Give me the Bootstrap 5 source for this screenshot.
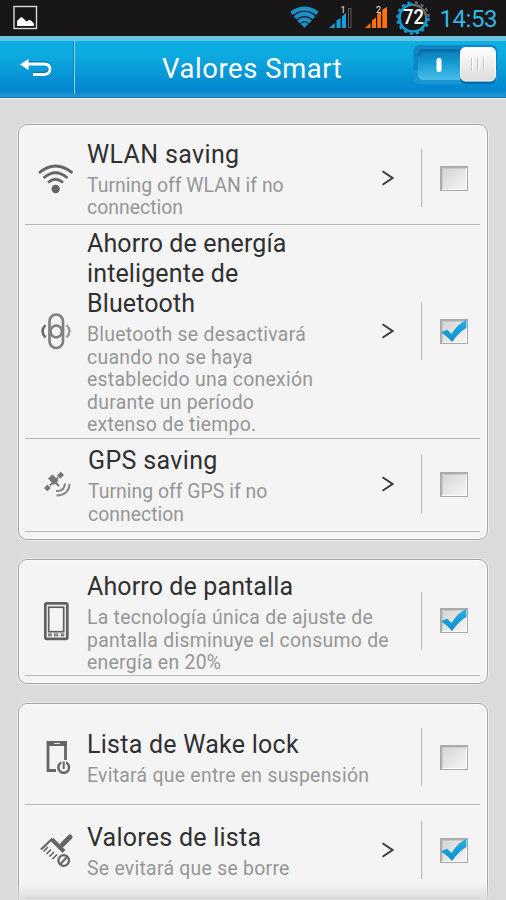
<!DOCTYPE html>
<html lang="es">
<head>
<meta charset="utf-8">
<meta name="viewport" content="width=device-width, initial-scale=1">
<title>Valores Smart</title>
<link rel="stylesheet" href="https://cdn.jsdelivr.net/npm/bootstrap@5.3.0/dist/css/bootstrap.min.css">
<style>
html,body{height:900px;overflow:hidden}
body{font-family:Roboto,sans-serif;background:#dbdbdb;color:#303030}
svg{display:block;flex:none}
.statusbar{height:36px;background:#181617}
.topbar{height:62px;border-top:5px solid #6cc5e0;border-bottom:1px solid #0f6fa5;background:linear-gradient(#0cafe2,#0cabe0 25%,#0486cf 88%,#2796d4);box-shadow:0 1px 0 #eef2f4}
.backbtn{width:75px;height:53px;border-right:1px solid #8fd4ee;box-shadow:inset -1px 0 0 #0a7fb8}
.heading{font-size:27.4px;line-height:32px;letter-spacing:.6px;color:#fff;font-weight:400;width:182px;margin-left:87px;white-space:nowrap}
.toggle{margin-left:67px}
.page{padding:26px 18px 0;height:802px;overflow:hidden}
.panel{background:#f4f4f4;border:1px solid #a2a2a2;border-radius:9px;box-shadow:0 0 0 1px #ececec,inset 0 0 0 1px #fbfbfb;padding:0 7px 7px 6px;margin-bottom:19px}
.setting{border-bottom:1px solid #b9b9b9}
.iconcell{width:62px;padding-left:10px}
.desc{font-size:19.4px;line-height:22.5px;letter-spacing:.27px;color:#969696;margin:5px 0 0;white-space:nowrap}
.ttl{font-size:25px;line-height:30px;letter-spacing:.12px;font-weight:400;margin:0;white-space:nowrap}
.latin .ttl{letter-spacing:.35px}
.latin .desc{letter-spacing:.02px}
.chev{margin-right:27px}
.rule{width:2px;height:58px;background:#bcbcbc;border-right:1px solid #e8e8e8}
.boxcell{width:57px;padding-left:17px}
.h1r{height:100px;padding-top:7px}
.h1r .txt{padding-top:3px}
.h2r{height:214px;padding-bottom:1px}
.h2r .txt{padding-top:4px}
.h3r{height:93px;padding-bottom:2px}
.h3r .txt{padding:4px 0 0 1px}
.h4r{height:116px;padding-top:6px}
.h4r .txt{padding-top:6px}
.h5r{height:101px;padding-top:6px}
.h5r .txt,.h6r .txt{padding-top:4px}
.h5r .ttl,.h6r .ttl{letter-spacing:.25px}
.h6r{height:93px;padding-bottom:2px}
.fade-edge{height:17px;background:linear-gradient(rgba(219,219,219,0),rgba(219,219,219,.95))}
</style>
<script src="https://cdn.jsdelivr.net/npm/bootstrap@5.3.0/dist/js/bootstrap.bundle.min.js"></script>
</head>
<body>
<svg width="0" height="0" class="position-absolute">
<defs>
<linearGradient id="gbox" x1="0" y1="0" x2="1" y2="1"><stop offset="0" stop-color="#d2d2d2"/><stop offset="1" stop-color="#f6f6f6"/></linearGradient>
<linearGradient id="gtick" x1="0" y1="0" x2="0" y2="1"><stop offset="0" stop-color="#27b0e6"/><stop offset="1" stop-color="#0b8fce"/></linearGradient>
<linearGradient id="gtrack" x1="0" y1="0" x2="0" y2="1"><stop offset="0" stop-color="#0878b4"/><stop offset=".45" stop-color="#169bd4"/><stop offset="1" stop-color="#48bde6"/></linearGradient>
<linearGradient id="gknob" x1="0" y1="0" x2="0" y2="1"><stop offset="0" stop-color="#fff"/><stop offset="1" stop-color="#dcdcdc"/></linearGradient>
<symbol id="box" viewBox="0 0 30 27"><rect x=".5" y="1.500" width="27" height="24" fill="url(#gbox)" stroke="#a9a9a9"/><path d="M1.500 25V2.500H27" fill="none" stroke="#a0a0a0" opacity=".75"/><path d="M2.500 24V3.500H26" fill="none" stroke="#bdbdbd" opacity=".6"/><path d="M2 24.500H26.500V3" fill="none" stroke="#fff"/></symbol>
<symbol id="tick" viewBox="0 0 30 27"><path d="M1 14.500L7 11.500L11.500 16C15 10 20 5 26.500 1.500V10C21 13 16 18 12 24C9 20 5 17 1 14.500Z" fill="url(#gtick)"/></symbol>
<symbol id="chevron" viewBox="0 0 12 16"><path d="M.5 1.200L10.500 8L.5 14.800" fill="none" stroke="#3a3a3a" stroke-width="1.900"/></symbol>
</defs>
</svg>

<header>
<div class="statusbar d-flex align-items-center">
<svg width="506" height="36" viewBox="0 0 506 36">
<rect x="14" y="6.500" width="22.500" height="22" fill="#181617" stroke="#d9d9d9" stroke-width="1.400"/>
<path d="M17 26V21L20 18L21.500 17L24 19L26.500 21.500L29 20L31 20.500L34 23.500V26Z" fill="#fff"/>
<g fill="none" stroke="#1c8fc8" stroke-width="4"><path d="M291.500 13.300Q304.500 4 317.500 13.300"/><path d="M295 17.800Q304.500 10 314 17.800"/><path d="M298.500 22Q304.500 16.500 310.500 22"/></g>
<path d="M304.500 27.800L300.500 23.800Q304.500 20.500 308.500 23.800Z" fill="#1c8fc8"/>
<g fill="#12a0de"><path d="M329 28L334.800 23V28ZM336.500 28V20.500L340.500 18V28ZM342 28V16.500L346 13V28Z"/></g><rect x="348.500" y="8.500" width="2.500" height="19" fill="none" stroke="#585657"/>
<g fill="#ff6f0a"><path d="M365 28L370.500 23V28ZM372 28V20.500L376 17.500V28ZM377.200 28V14L381 11.500V28ZM382.300 28V9.500L387 7V28Z"/></g>
<g font-family="Roboto,sans-serif" fill="#e8e8e8" font-size="9"><text x="340.500" y="13">1</text><text x="376" y="13">2</text></g>
<g fill="none"><circle cx="413" cy="18" r="13.500" stroke="#159bd6" stroke-width="2.600"/><circle cx="413" cy="18" r="15.700" stroke="#159bd6" stroke-width="2.200" stroke-dasharray="3.100 3.066"/><path d="M413 4.500A13.500 13.500 0 0 1 426.400 16" stroke="#6b696a" stroke-width="2.800"/><path d="M413 2.300A15.700 15.700 0 0 1 428.700 18" stroke="#181617" stroke-width="2.800"/><path d="M415 2.400A15.700 15.700 0 0 1 428.700 18" stroke="#6b696a" stroke-width="2.200" stroke-dasharray="3.100 3.066"/></g>
<text x="403" y="24" font-family="Roboto,sans-serif" font-size="19.500" font-weight="500" fill="#fff" textLength="21" lengthAdjust="spacingAndGlyphs">72</text>
<text x="439.500" y="26.500" font-family="Roboto,sans-serif" font-size="24" fill="#33b5e5" textLength="58">14:53</text>
</svg>
</div>
<nav class="topbar d-flex align-items-start">
<div class="backbtn d-flex align-items-center">
<svg width="74" height="53" viewBox="0 0 74 53"><path d="M25 23H44Q50 23 50 28T44 33.500H33" transform="translate(0,-1.200)" fill="none" stroke="#0b76ad" stroke-width="3"/><path d="M25 23H44Q50 23 50 28T44 33.500H33" fill="none" stroke="#fff" stroke-width="2.800"/><path d="M20 23.500L28.500 18V29Z" fill="#fff"/></svg>
</div>
<h1 class="heading mb-0 mt-2 pt-1">Valores Smart</h1>
<svg class="toggle" width="90" height="48" viewBox="411 41 90 48">
<rect x="413.500" y="45" width="84" height="39" rx="6" fill="#1186c4"/><path d="M413.500 70V78Q413.500 84 420 84H490Q497.500 84 497.500 78V70Z" fill="#1a97d3"/>
<rect x="418" y="49" width="75" height="31" rx="5" fill="url(#gtrack)"/><path d="M419 56Q419 50.500 424 50.500H460" stroke="#0a6a9e" stroke-width="2" fill="none"/>
<rect x="436.500" y="58" width="5" height="14" rx="2" fill="#fff"/>
<rect x="460" y="49" width="36" height="35" rx="5" fill="#0a6299" opacity=".8"/>
<rect x="460.500" y="47.500" width="35" height="33.500" rx="5" fill="url(#gknob)" stroke="#fafafa"/>
<g stroke="#c4c4c4"><path d="M471.500 58V71M477.500 58V71M483.500 58V71"/></g><g stroke="#fff"><path d="M472.500 58V71M478.500 58V71M484.500 58V71"/></g>
</svg>
</nav>
</header>

<main class="page">
<section class="panel">
<div class="setting h1r latin d-flex align-items-center">
<div class="iconcell"><svg width="42" height="42" viewBox="35 157 42 42"><g fill="none" stroke="#666" stroke-width="2.700"><path d="M39 173Q55.500 159 72.500 173"/><path d="M43.500 178Q55.500 167.500 67.500 178"/><path d="M48 182.500Q55.500 176 63 182.500"/></g><circle cx="55.700" cy="189" r="4.200" fill="#666"/></svg></div>
<div class="txt flex-grow-1"><h2 class="ttl">WLAN saving</h2><p class="desc">Turning off WLAN if no<br>connection</p></div>
<svg class="chev" width="12" height="16"><use href="#chevron"/></svg><div class="rule"></div>
<div class="boxcell"><svg width="30" height="27"><use href="#box"/></svg></div>
</div>
<div class="setting h2r d-flex align-items-center">
<div class="iconcell"><svg width="42" height="42" viewBox="35 310 42 42"><g fill="none" stroke="#808080" stroke-width="2.700"><rect x="49.500" y="314.500" width="13.500" height="33.500" rx="6.750"/><circle cx="56.200" cy="331.500" r="5.800"/><path d="M45.500 325Q39.500 331 45.500 337.500" stroke="#666" stroke-width="2.400"/><path d="M66.500 325Q72.500 331 66.500 337.500" stroke="#999" stroke-width="2.400"/></g></svg></div>
<div class="txt flex-grow-1"><h2 class="ttl">Ahorro de energía<br>inteligente de<br>Bluetooth</h2><p class="desc">Bluetooth se desactivará<br>cuando no se haya<br>establecido una conexión<br>durante un período<br>extenso de tiempo.</p></div>
<svg class="chev" width="12" height="16"><use href="#chevron"/></svg><div class="rule"></div>
<div class="boxcell"><svg width="30" height="27"><use href="#box"/><use href="#tick"/></svg></div>
</div>
<div class="setting h3r latin d-flex align-items-center">
<div class="iconcell"><svg width="42" height="42" viewBox="35 463 42 42"><g fill="#777"><path d="M48 478.500L52.500 474.500L58.500 480.500L54 485Z"/><path d="M57 475.500L60.800 471.800L64 475L60.200 478.800ZM44 488L47.500 484.600L50.800 487.900L47.300 491.200Z"/></g><path d="M55.500 482.500L59 486M50 485.500L53 482.500M58 477.500L56 479.500" stroke="#777" stroke-width="2"/><g fill="none" stroke="#858585" stroke-width="2"><path d="M56 491Q64.500 491.500 65 483.500"/><path d="M56.500 495.500Q69 495 69.500 484"/></g></svg></div>
<div class="txt flex-grow-1"><h2 class="ttl">GPS saving</h2><p class="desc">Turning off GPS if no<br>connection</p></div>
<svg class="chev" width="12" height="16"><use href="#chevron"/></svg><div class="rule"></div>
<div class="boxcell"><svg width="30" height="27"><use href="#box"/></svg></div>
</div>
</section>

<section class="panel">
<div class="setting h4r d-flex align-items-center">
<div class="iconcell"><svg width="42" height="42" viewBox="35 600 42 42"><rect x="45.300" y="603.300" width="22" height="35.500" rx="1.500" fill="#f4f4f4" stroke="#606060" stroke-width="2.700"/><rect x="48.700" y="607.200" width="15" height="24.500" fill="none" stroke="#606060" stroke-width="1.700"/><g fill="none" stroke="#666" stroke-width="1.100"><rect x="48.800" y="634" width="2.400" height="1.800"/><rect x="54.500" y="634" width="3.200" height="1.800"/><rect x="61.300" y="634" width="2.400" height="1.800"/></g></svg></div>
<div class="txt flex-grow-1"><h2 class="ttl">Ahorro de pantalla</h2><p class="desc">La tecnología única de ajuste de<br>pantalla disminuye el consumo de<br>energía en 20%</p></div>
<div class="rule"></div>
<div class="boxcell"><svg width="30" height="27"><use href="#box"/><use href="#tick"/></svg></div>
</div>
</section>

<section class="panel">
<div class="setting h5r d-flex align-items-center">
<div class="iconcell"><svg width="42" height="42" viewBox="35 736 42 42"><path d="M56 770.500H48V742.500H65.500V760" fill="none" stroke="#666" stroke-width="2.800"/><path d="M47 741.200H67V746H47Z" fill="#666"/><path d="M54 743.500H60" stroke="#eee"/><circle cx="63.700" cy="767.500" r="5.300" fill="#f4f4f4" stroke="#666" stroke-width="2.500"/><path d="M63.700 760V767" stroke="#f4f4f4" stroke-width="4.500"/><path d="M63.700 761.500V769" stroke="#666" stroke-width="2"/></svg></div>
<div class="txt flex-grow-1"><h2 class="ttl">Lista de Wake lock</h2><p class="desc">Evitará que entre en suspensión</p></div>
<div class="rule"></div>
<div class="boxcell"><svg width="30" height="27"><use href="#box"/></svg></div>
</div>
<div class="setting h6r d-flex align-items-center">
<div class="iconcell"><svg width="42" height="42" viewBox="35 829 42 42"><g fill="none" stroke="#666"><path d="M70 837L62.500 844.500" stroke-width="5" stroke-linecap="round"/><path d="M52 839.500L64 851.500" stroke-width="4"/><path d="M41 849.500L52.500 838.500" stroke-width="2.400"/><path d="M43.500 851.500L48 847M46.500 854L51 849.500M49.500 856.500L54 852M52.500 859L57 854.500" stroke-width="1.700"/></g><circle cx="63.700" cy="860.500" r="5.300" fill="#f4f4f4" stroke="#666" stroke-width="2.300"/><path d="M60.500 864L67 857" stroke="#666" stroke-width="2"/></svg></div>
<div class="txt flex-grow-1"><h2 class="ttl">Valores de lista</h2><p class="desc">Se evitará que se borre</p></div>
<svg class="chev" width="12" height="16"><use href="#chevron"/></svg><div class="rule"></div>
<div class="boxcell"><svg width="30" height="27"><use href="#box"/><use href="#tick"/></svg></div>
</div>
</section>
</main>
<div class="fade-edge fixed-bottom"></div>
</body>
</html>
